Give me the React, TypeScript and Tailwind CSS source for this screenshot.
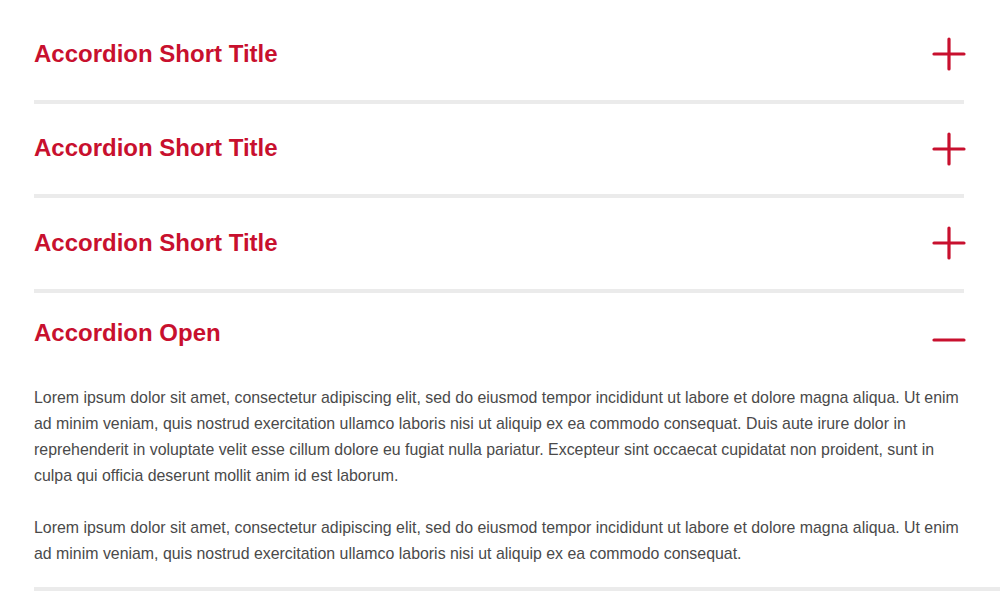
import { useState } from 'react'

const items = [
  { id: 1, title: 'Accordion Short Title' },
  { id: 2, title: 'Accordion Short Title' },
  { id: 3, title: 'Accordion Short Title' },
]

function PlusIcon() {
  return (
    <svg width="34" height="34" viewBox="0 0 34 34" fill="none" stroke="#c8102e" strokeWidth="3.2" strokeLinecap="round">
      <line x1="17" y1="2" x2="17" y2="32" />
      <line x1="2" y1="17" x2="32" y2="17" />
    </svg>
  )
}

function MinusIcon() {
  return (
    <svg width="34" height="34" viewBox="0 0 34 34" fill="none" stroke="#c8102e" strokeWidth="3.2" strokeLinecap="round">
      <line x1="2" y1="17" x2="32" y2="17" />
    </svg>
  )
}

export default function App() {
  const [open, setOpen] = useState<number | null>(4)

  return (
    <div className="min-h-[600px] bg-white pt-[9px] font-['Liberation_Sans',Arial,sans-serif] overflow-hidden">
      <div className="ml-[34px] w-[930px]">
        {items.map((item) => (
          <div key={item.id} className="border-b-4 border-[#ebebeb]">
            <button
              onClick={() => setOpen(item.id)}
              className="flex h-[90.5px] w-full items-center justify-between pb-[1px] text-left"
            >
              <span className="text-[24px] font-bold leading-[28px] text-[#c8102e]">{item.title}</span>
              <span className="-mr-[2px] mt-[1px]"><PlusIcon /></span>
            </button>
          </div>
        ))}

        <div className="relative">
          <button
            onClick={() => setOpen(open === 4 ? null : 4)}
            className="flex h-[92px] w-full items-start justify-between pt-[26px] text-left"
          >
            <span className="text-[24px] font-bold leading-[28px] text-[#c8102e]">Accordion Open</span>
            <span className="-mr-[2px] mt-[4px]">{open === 4 ? <MinusIcon /> : <PlusIcon />}</span>
          </button>
          {open === 4 && (
            <div className="pb-[20px] text-[15.9px] leading-[26px] text-[#4a4a4a]">
              <p className="mb-[26px]">
                Lorem ipsum dolor sit amet, consectetur adipiscing elit, sed do eiusmod tempor incididunt ut labore et dolore magna aliqua. Ut enim ad minim veniam, quis nostrud exercitation ullamco laboris nisi ut aliquip ex ea commodo consequat. Duis aute irure dolor in reprehenderit in voluptate velit esse cillum dolore eu fugiat nulla pariatur. Excepteur sint occaecat cupidatat non proident, sunt in culpa qui officia deserunt mollit anim id est laborum.
              </p>
              <p>
                Lorem ipsum dolor sit amet, consectetur adipiscing elit, sed do eiusmod tempor incididunt ut labore et dolore magna aliqua. Ut enim ad minim veniam, quis nostrud exercitation ullamco laboris nisi ut aliquip ex ea commodo consequat.
              </p>
            </div>
          )}
        </div>
      </div>
      <div className="ml-[34px] h-[4px] bg-[#ebebeb]" />
    </div>
  )
}
